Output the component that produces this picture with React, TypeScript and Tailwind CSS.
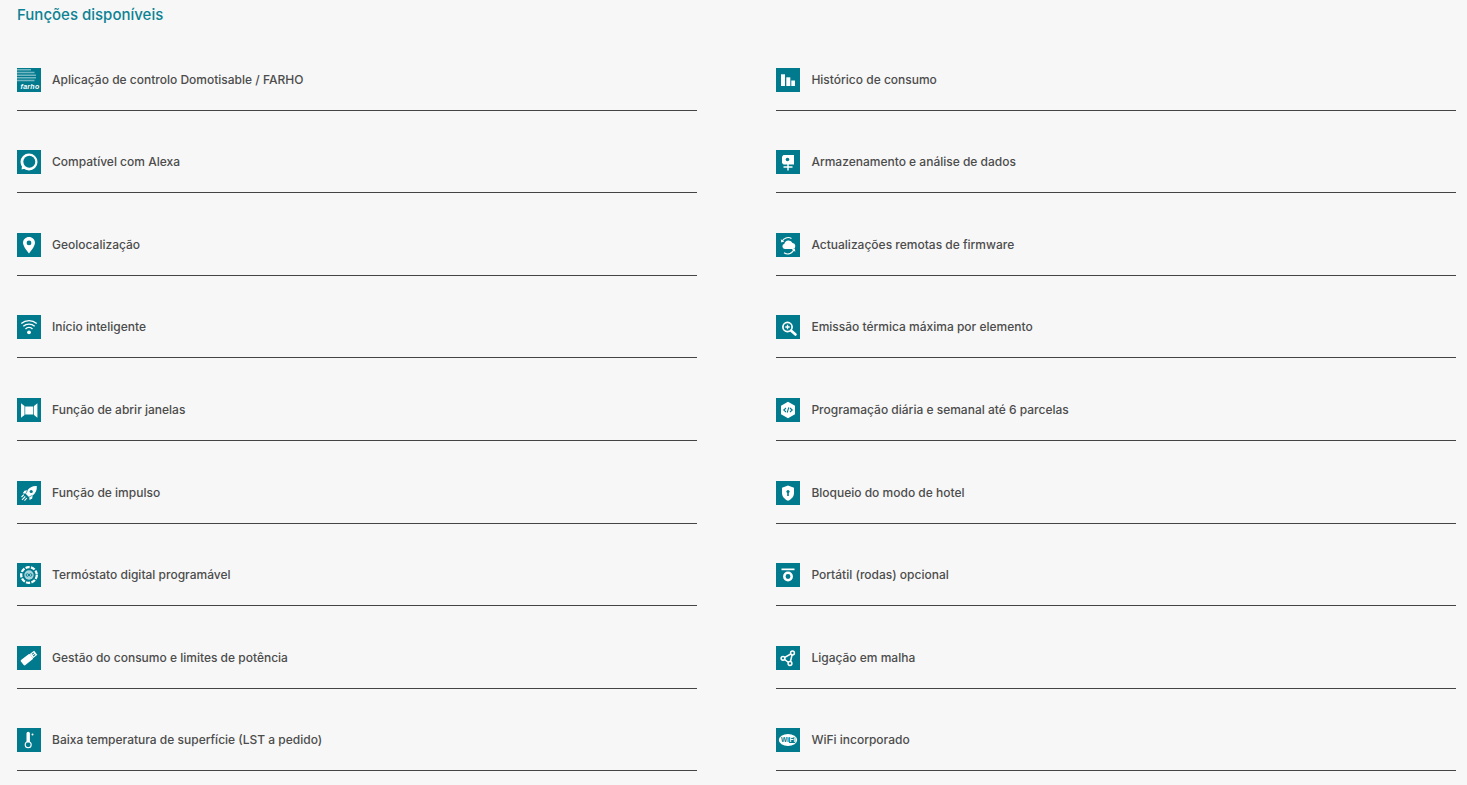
import React from "react";

const W = "#ffffff";
const T = "#007a8c";

const icons: Record<string, React.ReactNode> = {
  farho: (
    <>
      <path d="M0 1h14v1.500H0zM0 3.700h17.500v1.500H0zM0 6.400h19v1.500H0zM0 9.100h19v1.500H0zM0 11.800h17.500v1.500H0z" fill="#74b7c2" />
      <text x="3.500" y="21" fill={W} fontSize="7" fontWeight="700" fontStyle="italic" letterSpacing="0.3" fontFamily="'Liberation Sans', sans-serif">
        farho
      </text>
    </>
  ),
  alexa: (
    <>
      <circle cx="12" cy="12" r="8.500" fill={W} />
      <path d="M5 16l-.4 3.600 3.800-1z" fill={W} />
      <circle cx="12.300" cy="11.700" r="6" fill={T} />
    </>
  ),
  pin: (
    <path
      fillRule="evenodd"
      d="M12 4c-3.300 0-6 2.600-6 5.800 0 4 6 10.700 6 10.700s6-6.700 6-10.700C18 6.600 15.300 4 12 4zm0 3.500a2.400 2.400 0 1 1 0 4.800 2.400 2.400 0 0 1 0-4.800z"
      fill={W}
    />
  ),
  wifi: (
    <>
      <circle cx="12" cy="17.300" r="1.900" fill={W} />
      <path d="M8.500 14a5 5 0 0 1 7 0M6.300 11.300a8.500 8.500 0 0 1 11.400 0M4.300 8.500a11.800 11.800 0 0 1 15.400 0" fill="none" stroke={W} strokeWidth="1.400" />
    </>
  ),
  window: (
    <>
      <path d="M4 5.300l3.500 2.700v9l-3.500 2.700zM20.400 5.300L17 8v9l3.400 2.700z" fill={W} />
      <rect x="8.200" y="8.500" width="8.100" height="8" fill={W} />
    </>
  ),
  rocket: (
    <>
      <path d="M19.800 5c-4.300-.3-7.300 1.500-9.300 4.300l-3 .4-1.700 2.600 2.900.4 3.500 3.500.4 2.900 2.600-1.700.4-3c2.900-2 4.600-5 4.200-9.400z" fill={W} />
      <path d="M10.500 9.300l-1.800 3.400M15.400 14.400l-3.400 1.700" stroke={T} strokeWidth="0.700" />
      <circle cx="14.200" cy="10.500" r="1.600" fill={T} />
      <path d="M8.300 15.500l-3.300 3.300M9.800 17l-2.300 2.600M6.800 13.700l-2.300 2.300" stroke={W} strokeWidth="1.100" />
    </>
  ),
  thermostat: (
    <>
      <circle cx="12" cy="12" r="7.800" fill="none" stroke={W} strokeWidth="2.300" strokeDasharray="4.200 1.300" />
      <circle cx="12" cy="12" r="4.700" fill="#a9d5dc" />
      <circle cx="10.400" cy="12" r="1.300" fill="none" stroke={T} strokeWidth="0.900" />
      <circle cx="13.600" cy="12" r="1.300" fill="none" stroke={T} strokeWidth="0.900" />
    </>
  ),
  usb: (
    <g transform="rotate(-38 12 12)">
      <rect x="3.500" y="8.700" width="11.500" height="6.600" rx="1" fill={W} />
      <rect x="15" y="9.400" width="5.500" height="5.200" fill={W} />
      <rect x="16.500" y="10.500" width="2.500" height="1" fill={T} />
      <rect x="16.500" y="12.500" width="2.500" height="1" fill={T} />
    </g>
  ),
  thermometer: (
    <>
      <path d="M9.500 5.400a1.700 1.700 0 0 1 3.400 0v8.900H9.500z" fill={W} />
      <circle cx="11.200" cy="16.800" r="3" fill="none" stroke={W} strokeWidth="1.100" />
      <circle cx="15.500" cy="6.400" r="1" fill={W} />
    </>
  ),
  bars: (
    <>
      <rect x="5" y="6.300" width="4" height="11.700" fill={W} />
      <rect x="10.300" y="9.300" width="4" height="8.700" fill={W} />
      <rect x="15.300" y="12.500" width="3.700" height="5.500" fill={W} />
    </>
  ),
  presentation: (
    <>
      <path d="M7.500 5H18v9.500H7.500L6 13V6.500z" fill={W} />
      <circle cx="11.500" cy="9.500" r="1.800" fill={T} />
      <path d="M12 14v6.500M7.500 17h9" stroke={W} strokeWidth="1.400" />
    </>
  ),
  cloudSync: (
    <>
      <path d="M8.800 16a2.700 2.700 0 0 1-.4-5.300 4.300 4.300 0 0 1 8.100-.6 3 3 0 0 1 .6 5.900z" fill={W} />
      <path d="M6 8.800A6.500 6.500 0 0 1 15.500 5.500M18 15.800A6.500 6.500 0 0 1 8 19.800" fill="none" stroke={W} strokeWidth="1.100" />
      <path d="M4.800 6.200l.5 3.400 3-1zM19.300 18.800l-.5-3.400-3 1z" fill={W} />
    </>
  ),
  zoom: (
    <>
      <circle cx="11.500" cy="12" r="4.600" fill="none" stroke={W} strokeWidth="1.700" />
      <path d="M15.200 15.700l4.300 3.800" stroke={W} strokeWidth="2.600" strokeLinecap="round" />
      <path d="M11.500 9.800v4.400M9.300 12h4.400" stroke={W} strokeWidth="1.300" />
    </>
  ),
  hexCode: (
    <>
      <path d="M12 3.800l7 4v8.400l-7 4-7-4V7.800z" fill={W} />
      <path d="M10 10l-2.200 2 2.200 2M14 10l2.200 2-2.200 2M12.800 9.300l-1.600 5.400" fill="none" stroke={T} strokeWidth="1.100" />
    </>
  ),
  shield: (
    <>
      <path d="M12 4.500l6 2.200v5c0 4-2.600 6.500-6 8-3.400-1.500-6-4-6-8v-5z" fill={W} />
      <circle cx="12" cy="10.500" r="1.600" fill={T} />
      <rect x="11.200" y="11" width="1.600" height="4" fill={T} />
    </>
  ),
  scale: (
    <>
      <rect x="5.500" y="5.500" width="13" height="1.700" fill={W} />
      <circle cx="12" cy="13.500" r="3.700" fill="none" stroke={W} strokeWidth="2.500" />
    </>
  ),
  share: (
    <>
      <path d="M7 12.300l9.500-5.300M7 12.300l7 5.200M16.500 7L14 17.500" stroke={W} strokeWidth="1.500" />
      <circle cx="7" cy="12.300" r="1.900" fill={T} stroke={W} strokeWidth="1.500" />
      <circle cx="16.500" cy="7" r="1.900" fill={T} stroke={W} strokeWidth="1.500" />
      <circle cx="14" cy="17.500" r="1.900" fill={T} stroke={W} strokeWidth="1.500" />
    </>
  ),
  wifiBadge: (
    <>
      <ellipse cx="12" cy="12" rx="9.200" ry="6" fill={W} />
      <rect x="12.800" y="9" width="6.500" height="6" rx="1" fill={T} />
      <text x="5" y="14.300" fill={T} fontSize="6.500" fontWeight="800" fontFamily="'Liberation Sans', sans-serif">
        Wi
      </text>
      <text x="13.600" y="14.300" fill={W} fontSize="6.500" fontWeight="800" fontFamily="'Liberation Sans', sans-serif">
        Fi
      </text>
    </>
  ),
};

const left = [
  ["farho", "Aplicação de controlo Domotisable / FARHO"],
  ["alexa", "Compatível com Alexa"],
  ["pin", "Geolocalização"],
  ["wifi", "Início inteligente"],
  ["window", "Função de abrir janelas"],
  ["rocket", "Função de impulso"],
  ["thermostat", "Termóstato digital programável"],
  ["usb", "Gestão do consumo e limites de potência"],
  ["thermometer", "Baixa temperatura de superfície (LST a pedido)"],
];

const right = [
  ["bars", "Histórico de consumo"],
  ["presentation", "Armazenamento e análise de dados"],
  ["cloudSync", "Actualizações remotas de firmware"],
  ["zoom", "Emissão térmica máxima por elemento"],
  ["hexCode", "Programação diária e semanal até 6 parcelas"],
  ["shield", "Bloqueio do modo de hotel"],
  ["scale", "Portátil (rodas) opcional"],
  ["share", "Ligação em malha"],
  ["wifiBadge", "WiFi incorporado"],
];

const FeatureRow = ({ icon, label }: { icon: string; label: string }) => (
  <div className="flex h-[43px] items-start gap-[11px] border-b border-[#444444] mb-[39.6px]">
    <svg viewBox="0 0 24 24" className="w-6 h-6 shrink-0 bg-[#007a8c]">
      {icons[icon]}
    </svg>
    <span className="text-[12px] leading-6 font-medium text-[#4c4c4c]">{label}</span>
  </div>
);

export default function App() {
  return (
    <div className="min-h-[785px] bg-[#f7f7f7] pl-[17px] pr-[11px] pt-[5px] font-['Inter',sans-serif] overflow-hidden">
      <h2 className="text-[15px] leading-5 font-medium text-[#0c8294] mb-[42.6px]">
        Funções disponíveis
      </h2>
      <div className="grid grid-cols-2 gap-x-[79.8px]">
        <div>
          {left.map(([icon, label]) => (
            <FeatureRow key={label} icon={icon} label={label} />
          ))}
        </div>
        <div>
          {right.map(([icon, label]) => (
            <FeatureRow key={label} icon={icon} label={label} />
          ))}
        </div>
      </div>
    </div>
  );
}
